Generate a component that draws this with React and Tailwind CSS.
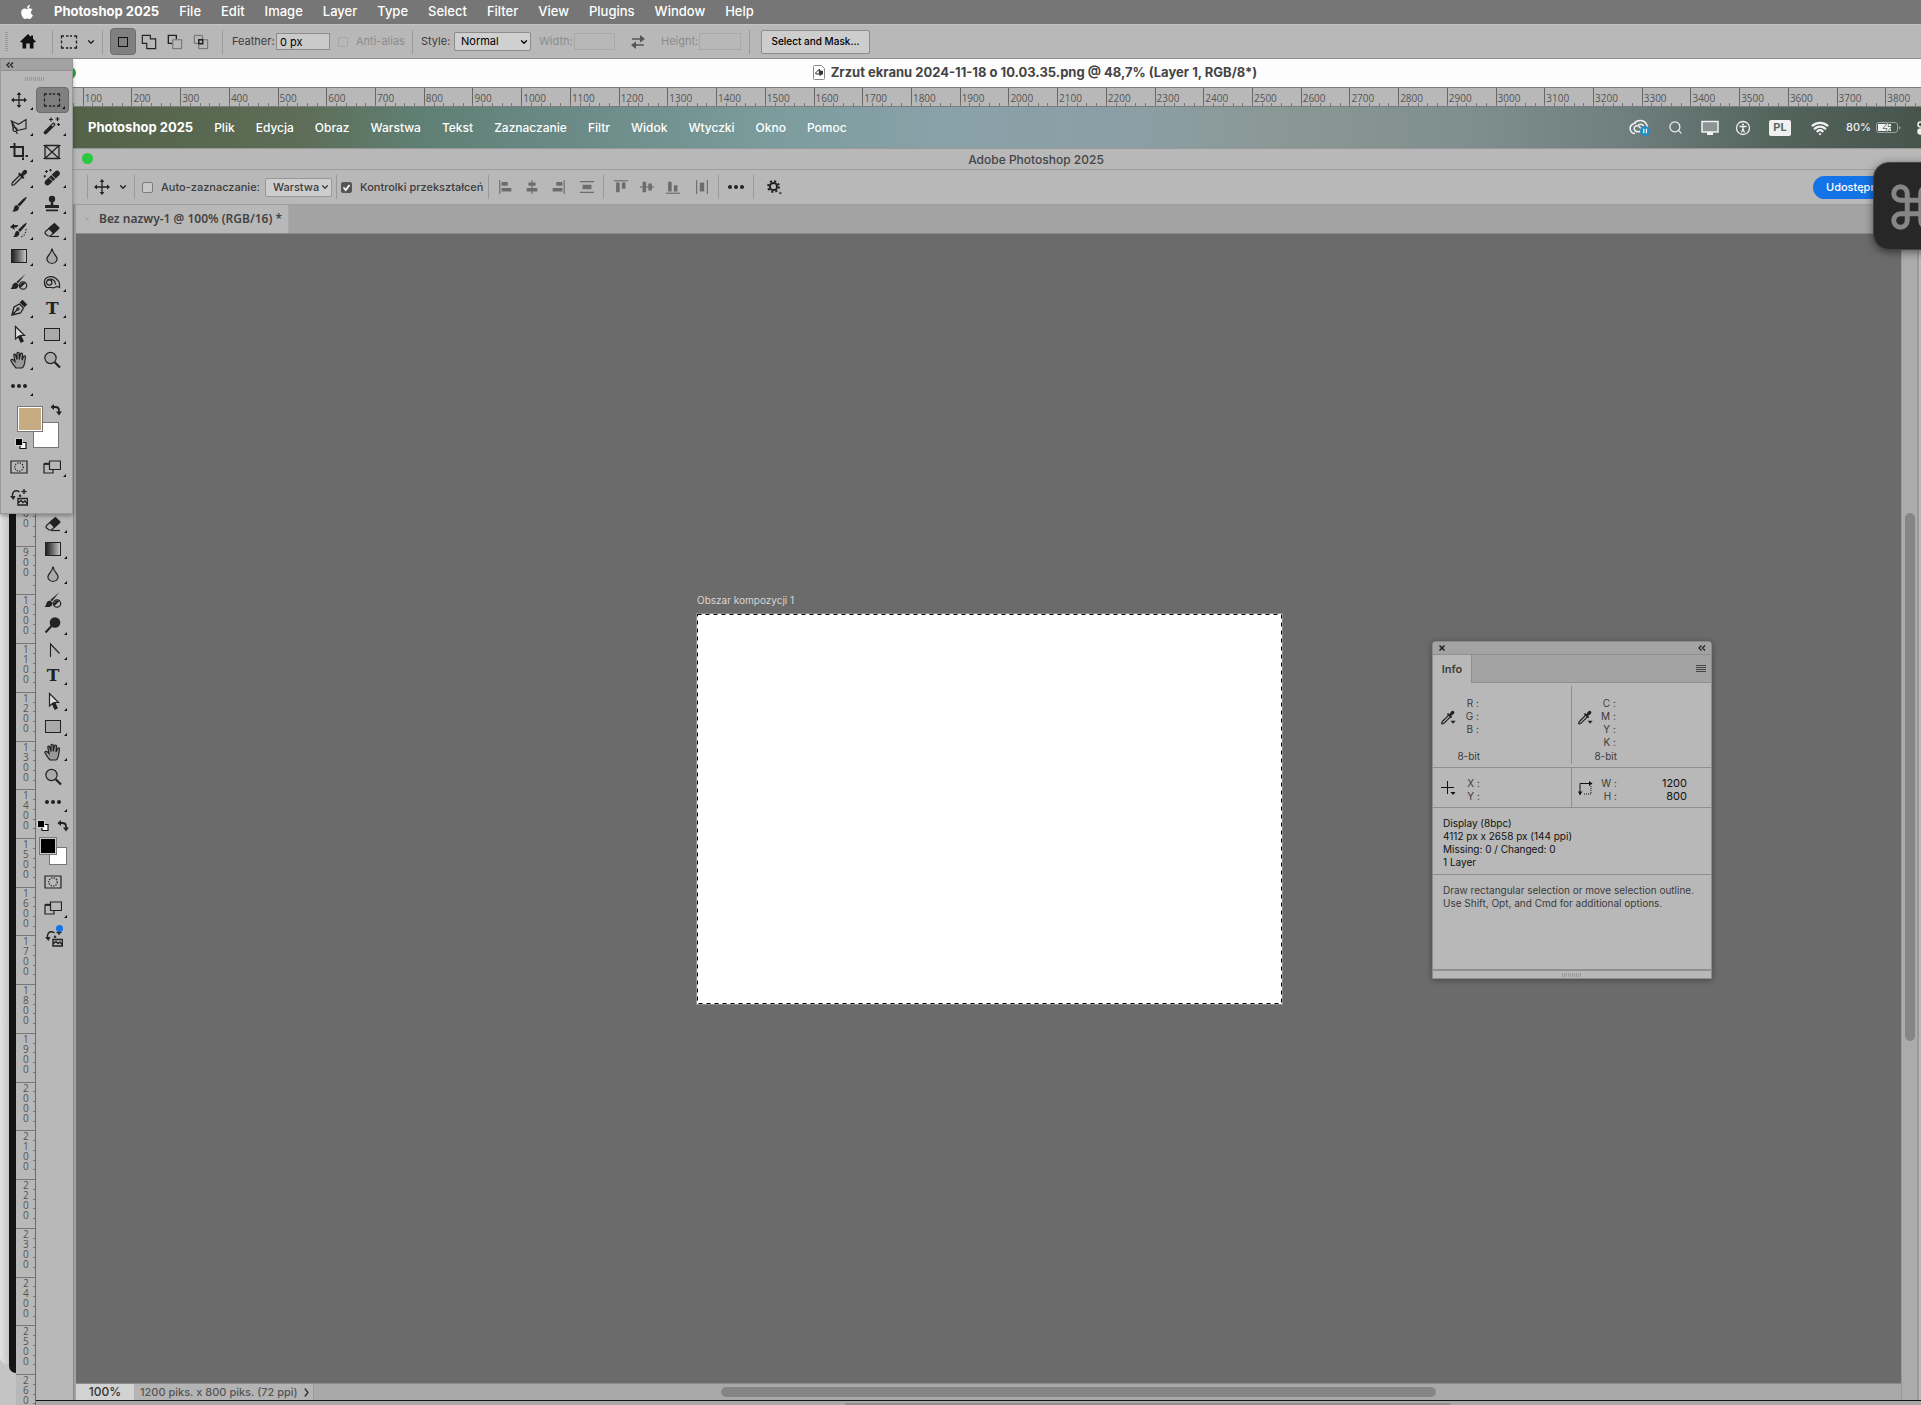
import React, { useState } from 'react';
import { FaApple } from 'react-icons/fa';
import { Command, ChevronDown, Search, Wifi, X } from 'lucide-react';

const OUTER_MENU = ['File', 'Edit', 'Image', 'Layer', 'Type', 'Select', 'Filter', 'View', 'Plugins', 'Window', 'Help'];
const INNER_MENU = ['Plik', 'Edycja', 'Obraz', 'Warstwa', 'Tekst', 'Zaznaczanie', 'Filtr', 'Widok', 'Wtyczki', 'Okno', 'Pomoc'];

// 18x18 stroke icon wrapper, shared by all the tools
const Icon = ({ children, size = 18, className = '' }) => (
  <svg width={size} height={size} viewBox="0 0 18 18" fill="none" stroke="currentColor" strokeWidth="1.2" className={`shrink-0 ${className}`}>
    {children}
  </svg>
);

const MoveIcon = () => (
  <Icon>
    <path d="M9 2v14M2 9h14" strokeWidth="1.3" />
    <path d="M9 1L6.600 4h4.800zM9 17l-2.400-3h4.800zM1 9l3-2.400v4.800zM17 9l-3-2.400v4.800z" fill="currentColor" stroke="none" />
  </Icon>
);

const MarqueeIcon = () => (
  <Icon>
    <path d="M1.500 5.500V3h2.500M6 3h2.500M10 3h2M14 3h2.500v2.500M16.500 7.500v3M16.500 12.500V15H14M12 15h-2M8.500 15H6M4 15H1.500v-2.500M1.500 10.500v-3" strokeWidth="1.300" />
  </Icon>
);

const LassoIcon = () => (
  <Icon>
    <path d="M6.500 13L1.500 4l7 3.200L16 2.500v9L7 13.500M1.500 4l2 8" />
    <circle cx="5" cy="12.500" r="2" />
    <path d="M6 14.500L7.500 17" />
  </Icon>
);

const WandIcon = () => (
  <Icon>
    <path d="M2.500 15.500L10.500 7.500" strokeWidth="3.600" strokeLinecap="round" />
    <path d="M9 9L10.700 7.300" stroke="#b8b8b8" strokeWidth="1.400" />
    <path d="M8 .5v4M6 2.500h4M14.500 0v4M12.500 2h4M15.500 6v3M14 7.500h3" strokeWidth="1.200" />
  </Icon>
);

const CropIcon = () => (
  <Icon>
    <path d="M4.500 0v13H14M0 4h13v9M13 14.500V17M15.500 13H18" strokeWidth="2" />
  </Icon>
);

const FrameIcon = () => (
  <Icon>
    <path d="M2 2.500h14v13H2zM2 2.500l14 13M16 2.500l-14 13" strokeWidth="1.300" />
    <path d="M.5 2.500h1.500M16 2.500h1.500M.5 15.500h1.500M16 15.500h1.500" />
  </Icon>
);

const EyedropperIcon = ({ size }) => (
  <Icon size={size}>
    <path d="M10 6L2.500 13.500Q1.500 15 2 16Q3 16.500 4.500 15.500L12 8" strokeWidth="1.300" />
    <path d="M8 5L9.500 3.500L11 5L13 2Q15 0 16.500 1.500Q18 3 16 5L13 7L14.500 8.500L13 10z" fill="currentColor" stroke="none" />
  </Icon>
);

// eyedropper with the small menu arrow used in the Info panel
const SamplerIcon = () => (
  <svg width="15" height="15" viewBox="0 0 18 18" fill="none" stroke="currentColor">
    <path d="M9 6.500L2 13.500Q.5 15 1 16.500Q2.500 17 4 15.500L11 8.500" strokeWidth="1.500" />
    <path d="M7 5L8.500 3.500L10 5L12 2Q14 0 15.500 1.500Q17 3 15 5L12 7L13.500 8.500L12 10z" fill="currentColor" stroke="none" />
    <path d="M11.500 13h6l-3 3.500z" fill="currentColor" stroke="none" />
  </svg>
);

const HealIcon = () => (
  <Icon>
    <path d="M4.500 13.500l9.500-9" strokeWidth="5.600" strokeLinecap="round" />
    <path d="M6 8.500l5 5M8.500 6l5 5" stroke="#b8b8b8" strokeWidth="1" />
    <path d="M3.500 1v3M2 2.500h3M7.500 0v2.500M6.200 1.200h2.600M1.800 6v2.500M.5 7.200h2.600" strokeWidth="1" />
  </Icon>
);

const BrushIcon = () => (
  <Icon>
    <path d="M16.500 2Q17 3 14 6.500L9.500 11.500L7.500 9.500L13 4Q16 1.500 16.500 2zM7 10l2 2Q9 16 5 16.500H2Q4 15 4 12.500Q4.500 10.300 7 10z" fill="currentColor" stroke="none" />
  </Icon>
);

const StampIcon = () => (
  <Icon>
    <circle cx="9" cy="4" r="3.200" fill="currentColor" stroke="none" />
    <path d="M8 6h2l.4 4H15q1 0 1 1.200V13H2v-1.800Q2 10 3 10h4.600zM3 14.500h12v1.800H3z" fill="currentColor" stroke="none" />
  </Icon>
);

const HistoryBrushIcon = () => (
  <Icon>
    <path d="M16.500 1.500Q17 3 14 6.500L10 11L8 9L13 4zM7.500 9.700l2 2Q9 15.500 6 16H3Q5 14.500 5 12.500Q5.500 10 7.500 9.700z" fill="currentColor" stroke="none" />
    <path d="M0 6l4-3.500V4h4.500l-2 2.500H4L5 9z" fill="currentColor" stroke="none" />
    <path d="M16 8Q16 14 11 16" strokeDasharray="1.200 1.600" />
  </Icon>
);

const EraserIcon = () => (
  <Icon>
    <path d="M2.500 10.500L10.500 3.500L15 8L7.500 15H5L2 12.500z" />
    <path d="M6 7.500L11.500 2.500L16 7L10.500 12.200z" fill="currentColor" />
    <path d="M7 15.500h9" />
  </Icon>
);

const GradientIcon = () => (
  <span className="block w-4 h-[14px] border border-current bg-linear-to-r from-[#222] to-[#c8c8c8]" />
);

const DropIcon = () => (
  <Icon>
    <path d="M9 1.500Q9.500 5 12.500 8.500Q15 11.500 13.500 14Q12 16.500 9 16.500Q6 16.500 4.500 14Q3 11.500 5.500 8.500Q8.500 5 9 1.500z" fill="#aaa" />
  </Icon>
);

const MixerIcon = () => (
  <Icon>
    <path d="M15.500 1L8 10.200L6.400 9zM6 9.500l2.500 2Q8.500 15.500 5 16H.5Q2.500 14.500 2.500 12Q3.500 9.500 6 9.500z" fill="currentColor" stroke="none" />
    <circle cx="13" cy="12.500" r="3.700" />
    <path d="M15.500 10A3.700 3.700 0 0 0 10.400 15z" fill="currentColor" stroke="none" />
  </Icon>
);

const SpongeIcon = () => (
  <Icon>
    <path d="M1.500 8Q2 5 6 3.800Q10 2.800 13 5.500Q16.500 8 16.500 11.500V14.500L13.500 13.500Q11 15.500 8.500 14.500L3.500 14.500Q1 12 1.500 8z" />
    <circle cx="6.200" cy="9.500" r="2.700" />
    <path d="M4 7.200Q8 5 11 7.500Q12.500 9 12.500 11.500" />
  </Icon>
);

const DodgeIcon = () => (
  <Icon>
    <circle cx="11" cy="6.500" r="5.300" fill="currentColor" stroke="none" />
    <path d="M7.500 10L1.500 16.500" strokeWidth="2" />
  </Icon>
);

const PenIcon = () => (
  <Icon>
    <path d="M2 16L4 8L9.500 5L13.500 9L10.500 14L2 16zM2 16l5.500-5.500" strokeWidth="1.300" />
    <circle cx="8" cy="10" r="1.100" />
    <path d="M10.500 3.500L12.500 1.500L16.500 5.500L14.500 7.500z" fill="currentColor" />
  </Icon>
);

const CornerIcon = () => (
  <Icon>
    <path d="M6.500 16V3l9 9.500" strokeWidth="1.100" />
  </Icon>
);

const TypeIcon = () => <span className="font-['DejaVu_Serif',serif] font-bold text-[17px] leading-none">T</span>;

const ArrowIcon = () => (
  <Icon>
    <path d="M5.500 1.500V14L8.500 11.500L11 17L13 16L10.500 10.500H14.500z" fill="#ddd" />
    <path d="M8.500 11.500L11 17L13 16L10.500 10.500z" fill="currentColor" />
  </Icon>
);

const RectIcon = () => <span className="block w-4 h-[13px] border border-current bg-[#aaa]" />;

const HandIcon = () => (
  <Icon>
    <path d="M6 17Q3.500 14.500 .8 9.500Q1.500 7.500 3.500 9L5 10.500L3.800 4Q4.200 2.500 5.500 3.500L7 8.500V2Q8 .5 9.200 2V8.500L10.500 2.500Q12 1.500 12.500 3L12 9L14 5Q15.500 4.500 15.500 6L14.500 12.500Q14 16 12 17z" fill="#999" />
  </Icon>
);

const ZoomIcon = () => (
  <Icon>
    <circle cx="7.500" cy="7" r="5.600" fill="#aaa" />
    <path d="M11.700 11.200L17 16.500" strokeWidth="2.200" />
  </Icon>
);

const DotsIcon = () => (
  <Icon>
    <g fill="currentColor" stroke="none">
      <circle cx="3" cy="9" r="2" />
      <circle cx="9" cy="9" r="2" />
      <circle cx="15" cy="9" r="2" />
    </g>
  </Icon>
);

const SwapColorsIcon = () => (
  <svg width="12" height="12" viewBox="0 0 12 12" className="text-[#222]">
    <path d="M3 3h2.500Q9 3 9 6.500V8" fill="none" stroke="currentColor" strokeWidth="1.800" />
    <path d="M4 0v6L.5 3zM6 7.500h6L9 11.500z" fill="currentColor" />
  </svg>
);

const DefaultColorsIcon = () => (
  <svg width="12" height="12" viewBox="0 0 12 12">
    <path d="M5 4.500h6v6H5z" fill="#fff" stroke="#111" strokeWidth="1.200" />
    <path d="M.5 .5h7v7h-7z" fill="#000" stroke="#eee" strokeWidth=".8" />
  </svg>
);

const MaskIcon = () => (
  <Icon>
    <path d="M1 3h16v12H1z" />
    <circle cx="9" cy="9" r="4.200" strokeDasharray="1.300 1.200" />
  </Icon>
);

const ScreenModeIcon = () => (
  <Icon>
    <path d="M1 6h9v9H1z" />
    <path d="M1 5.800h5" strokeWidth="2" />
    <path d="M6.500 3h11v8.500h-11z" fill="#b8b8b8" />
  </Icon>
);

const GenerateIcon = () => (
  <Icon>
    <path d="M9.500 4Q6 1.500 3.500 4Q2 6 2.500 9" strokeWidth="1.400" />
    <path d="M0 8h5.500L3.500 12z" fill="currentColor" stroke="none" />
    <path d="M8 10.500h9.500v6.500H8zM8 15l3-2.500 2 2 2-1.500 2.500 3" strokeWidth="1.400" />
    <path d="M14 1v5M11.500 3.500h5M10 6.500v2.500M8.800 7.800h2.500" strokeWidth="1.300" />
  </Icon>
);

const HomeIcon = () => (
  <svg width="16" height="15" viewBox="0 0 16 15" className="text-[#111]" fill="currentColor">
    <path d="M8 0L0 7.800L1.500 8.500H2.500V14Q2.500 14.500 3 14.500H6.200V9.500H9.800V14.500H13Q13.500 14.500 13.500 14V8.500H14.500L16 7.800L13 4.800V1.500H11V3z" />
  </svg>
);

const GearIcon = () => (
  <svg width="15" height="15" viewBox="0 0 15 15" fill="none" stroke="currentColor" className="text-[#222]">
    <circle cx="6.500" cy="6.500" r="3.600" strokeWidth="2" />
    <circle cx="6.500" cy="6.500" r="5.400" strokeWidth="2" strokeDasharray="2.120 2.120" />
    <path d="M11.500 12.500h3.500l-1.700 2z" fill="currentColor" stroke="none" />
  </svg>
);

const CollapseIcon = () => (
  <svg width="8" height="6" viewBox="0 0 8 6" fill="none" stroke="#222" strokeWidth="1.300">
    <path d="M3.500 .5L1 3l2.500 2.500M7 .5L4.500 3L7 5.500" />
  </svg>
);

const TOOLS = [
  { name: 'Move', icon: MoveIcon, more: true },
  { name: 'Rectangular Marquee', icon: MarqueeIcon, more: true },
  { name: 'Polygonal Lasso', icon: LassoIcon, more: true },
  { name: 'Magic Wand', icon: WandIcon, more: true },
  { name: 'Crop', icon: CropIcon, more: true },
  { name: 'Frame', icon: FrameIcon },
  { name: 'Eyedropper', icon: EyedropperIcon, more: true },
  { name: 'Healing Brush', icon: HealIcon, more: true },
  { name: 'Brush', icon: BrushIcon, more: true },
  { name: 'Clone Stamp', icon: StampIcon, more: true },
  { name: 'History Brush', icon: HistoryBrushIcon, more: true },
  { name: 'Eraser', icon: EraserIcon, more: true },
  { name: 'Gradient', icon: GradientIcon, more: true },
  { name: 'Blur', icon: DropIcon, more: true },
  { name: 'Adjustment Brush', icon: MixerIcon },
  { name: 'Sponge', icon: SpongeIcon, more: true },
  { name: 'Pen', icon: PenIcon, more: true },
  { name: 'Type', icon: TypeIcon, more: true },
  { name: 'Path Selection', icon: ArrowIcon, more: true },
  { name: 'Rectangle', icon: RectIcon, more: true },
  { name: 'Hand', icon: HandIcon, more: true },
  { name: 'Zoom', icon: ZoomIcon },
  { name: 'Edit Toolbar', icon: DotsIcon, more: true },
];

const INNER_TOOLS = [
  { name: 'Gumka', icon: EraserIcon, more: true },
  { name: 'Gradient', icon: GradientIcon, more: true },
  { name: 'Rozmywanie', icon: DropIcon, more: true },
  { name: 'Pędzel dopasowania', icon: MixerIcon },
  { name: 'Rozjaśnianie', icon: DodgeIcon, more: true },
  { name: 'Konwertowanie', icon: CornerIcon, more: true },
  { name: 'Tekst', icon: TypeIcon, more: true },
  { name: 'Zaznaczanie ścieżek', icon: ArrowIcon, more: true },
  { name: 'Prostokąt', icon: RectIcon, more: true },
  { name: 'Rączka', icon: HandIcon, more: true },
  { name: 'Lupka', icon: ZoomIcon },
  { name: 'Edytuj pasek', icon: DotsIcon, more: true },
];

const MoreMark = () => (
  <svg width="3" height="3" viewBox="0 0 3 3" className="absolute right-[3px] bottom-[3px]">
    <path d="M3 0v3H0z" fill="#111" />
  </svg>
);

const ToolButton = ({ tool, selected, onClick, className = '' }) => {
  const ToolIcon = tool.icon;
  return (
    <button
      aria-label={tool.name}
      onClick={onClick}
      className={`relative flex items-center justify-center text-[#222] ${selected ? 'bg-[#808080] rounded-sm border border-[#6c6c6c]' : ''} ${className}`}
    >
      <ToolIcon />
      {tool.more && <MoreMark />}
    </button>
  );
};

const Separator = ({ className = '' }) => <span className={`w-px h-6 bg-[#9a9a9a] shrink-0 ${className}`} />;

const MenuBar = () => (
  <nav className="h-6 shrink-0 bg-[#767676] flex items-center pl-5 pb-px text-white text-[13px] font-medium text-shadow-xs">
    <FaApple className="w-[14px] h-4 mr-5" />
    <div className="flex items-center gap-5">
      <button className="font-bold">Photoshop 2025</button>
      {OUTER_MENU.map(item => <button key={item}>{item}</button>)}
    </div>
  </nav>
);

const OptionsBar = () => (
  <div className="h-[35px] shrink-0 bg-[#b8b8b8] border-t border-t-[#c2c2c2] border-b border-b-[#8e8e8e] flex items-center text-[11px] text-[#3c3c3c] whitespace-nowrap">
    <span className="ml-[5px] w-[3px] h-5 bg-[repeating-linear-gradient(to_bottom,#999_0_1px,transparent_1px_2px)]" />
    <button aria-label="Home" className="ml-3"><HomeIcon /></button>
    <Separator className="ml-4" />
    <button aria-label="Tool preset" className="ml-[7px] flex items-center gap-2 text-[#222]"><MarqueeIcon /><ChevronDown className="w-[10px] h-[10px]" strokeWidth={3} /></button>
    <Separator className="ml-[6px]" />
    <div className="ml-[7px] flex">
      <button aria-label="New selection" className="w-[26px] h-[27px] flex items-center justify-center bg-[#808080] border border-[#6c6c6c] rounded-sm">
        <span className="w-[10px] h-[10px] border border-[#111]" />
      </button>
      <button aria-label="Add to selection" className="w-[26px] flex items-center justify-center text-[#222]">
        <Icon size={16}><path d="M1.500 1.500h9v4h6v11h-10v-6h-5z" strokeWidth="1.300" /></Icon>
      </button>
      <button aria-label="Subtract from selection" className="w-[26px] flex items-center justify-center text-[#222]">
        <Icon size={16}><path d="M6 10.500H1.500v-9h9V6" strokeWidth="1.500" /><path d="M6.500 6.500h10v10h-10z" stroke="#666" strokeWidth="1" /></Icon>
      </button>
      <button aria-label="Intersect with selection" className="w-[26px] flex items-center justify-center text-[#222]">
        <Icon size={16}><path d="M1.500 1.500h9v9h-9zM6.500 6.500h10v10h-10z" stroke="#666" strokeWidth="1" /><path d="M6.500 6.500h4.500V11H6.500z" strokeWidth="1.500" /></Icon>
      </button>
    </div>
    <Separator className="ml-2" />
    <label htmlFor="feather" className="ml-[9px] w-11">Feather:</label>
    <input id="feather" defaultValue="0 px" className="w-[54px] h-[17px] pl-[3px] bg-[#cacaca] border border-[#8c8c8c] text-black" />
    <input id="antialias" type="checkbox" disabled className="ml-2 w-[10px] h-[10px] appearance-none border border-[#a6a6a6] rounded-xs" />
    <label htmlFor="antialias" className="ml-2 w-14 text-[#8c8c8c]">Anti-alias</label>
    <Separator />
    <label htmlFor="style" className="ml-2 w-[33px]">Style:</label>
    <span className="relative flex items-center">
      <select id="style" className="appearance-none w-[77px] h-[19px] pl-[6px] bg-[#d0d0d0] border border-[#8c8c8c] rounded-xs text-black">
        <option>Normal</option>
      </select>
      <ChevronDown className="absolute right-[2px] w-[10px] h-[10px] text-black pointer-events-none" strokeWidth={3} />
    </span>
    <label htmlFor="width" className="ml-2 w-[35px] text-[#8c8c8c]">Width:</label>
    <input id="width" disabled className="w-[41px] h-[17px] border border-[#a9a9a9]" />
    <button aria-label="Swap width and height" className="ml-4 text-[#555]">
      <svg width="14" height="14" viewBox="0 0 14 14" fill="none" stroke="currentColor" strokeWidth="1.500">
        <path d="M1 4h9M13 10H4" />
        <path d="M9 0l5 4-5 3.500zM5 6.500L0 10l5 4z" fill="currentColor" stroke="none" />
      </svg>
    </button>
    <label htmlFor="height" className="ml-4 w-[38px] text-[#8c8c8c]">Height:</label>
    <input id="height" disabled className="w-[42px] h-[17px] border border-[#a9a9a9]" />
    <Separator className="ml-2" />
    <button className="ml-[11px] h-6 w-[109px] bg-[#cdcdcd] border border-[#8c8c8c] rounded-xs text-[10px] font-medium text-black">Select and Mask...</button>
  </div>
);

const DocumentTitle = () => (
  <header className="relative h-7 shrink-0 bg-[#fdfdfd] flex items-center justify-center gap-[6px] pl-[149px] pb-px text-[13px] font-bold text-[#444]">
    <span className="absolute left-[64px] w-3 h-3 rounded-full bg-[#28a53a]" />
    <svg width="12" height="15" viewBox="0 0 12 15" fill="none" stroke="#888" strokeWidth="1">
      <path d="M.5 1.500q0-1 1-1H8.500L11.500 3.500V13.500q0 1-1 1H1.500q-1 0-1-1z" fill="#fff" />
      <path d="M2.500 8L6.500 4v5H3z" stroke="#333" />
      <path d="M5.500 5L10 6v3L6.500 11z" fill="#333" stroke="none" />
    </svg>
    <h1>Zrzut ekranu 2024-11-18 o 10.03.35.png @ 48,7% (Layer 1, RGB/8*)</h1>
  </header>
);

const HorizontalRuler = () => (
  <div className="h-5 shrink-0 bg-[#b8b8b8] border-y border-[#7c7c7c] pl-[34px] overflow-hidden">
    <div className="w-[1900px] h-full flex">
      {Array.from({ length: 39 }, (_, i) => (
        <div key={i} className="flex-1 min-w-0 flex flex-col justify-between border-l border-[#666]">
          <span className="h-[15px] pl-px font-['Open_Sans',sans-serif] text-[10px] leading-[20px] text-[#555]">{i * 100}</span>
          <span className="h-[3px] -ml-px flex">
            {[0, 1, 2, 3, 4].map(t => <span key={t} className="flex-1 border-l border-[#777]" />)}
          </span>
        </div>
      ))}
    </div>
  </div>
);

const VerticalRuler = () => (
  <div className="w-5 shrink-0 bg-[#b8b8b8] border-r border-[#6a6a6a] overflow-hidden">
    <div className="h-[1316px] flex flex-col">
      {Array.from({ length: 27 }, (_, i) => (
        <div key={i} className="flex-1 min-h-0 flex justify-between border-t border-[#777]">
          <span className="w-[7px] ml-[7px] break-all font-['Open_Sans',sans-serif] text-[10px] leading-[10px] text-[#555]">{i * 100}</span>
          <span className="w-[2px] shrink-0 -mt-px flex flex-col">
            {[0, 1, 2, 3, 4].map(t => <span key={t} className="flex-1 border-t border-[#777]" />)}
          </span>
        </div>
      ))}
    </div>
  </div>
);

const StatusIcons = () => (
  <div className="flex items-center text-[#f0f0f0] text-[11px] font-medium">
    <svg width="22" height="18" viewBox="0 0 22 18" fill="none" stroke="currentColor" strokeWidth="1.500">
      <path d="M6 14.500A5 5 0 0 1 4 5Q5 4 7 4M5 4.500Q8 1 12 1.500Q17.500 2.500 18.500 8" />
      <path d="M12 12Q9 13.500 6.500 12A3 3 0 0 1 6.500 7Q9 6 11 8.500L14 11M9 6Q12 4 15 7" />
      <circle cx="16" cy="12" r="5" fill="#1c8fc4" stroke="none" />
      <path d="M14.700 9.800v4.400M17.400 9.800v4.400" strokeWidth="1.300" />
    </svg>
    <Search className="ml-[17px] w-[15px] h-[15px]" />
    <svg width="18" height="16" viewBox="0 0 18 16" className="ml-[18px]">
      <path d="M1 1.500h16v10.500H1z" fill="#8b9694" stroke="currentColor" strokeWidth="1.500" />
      <path d="M6 12h6v3H6z" fill="currentColor" />
    </svg>
    <svg width="16" height="16" viewBox="0 0 16 16" fill="none" stroke="currentColor" strokeWidth="1.300" className="ml-4">
      <circle cx="8" cy="8" r="6.500" />
      <circle cx="8" cy="4.500" r="1" fill="currentColor" stroke="none" />
      <path d="M4.500 6.500h7M8 6.500V9l-1.500 3.500M8 9l1.500 3.500" />
    </svg>
    <span className="ml-[18px] w-[22px] h-4 flex items-center justify-center bg-[#f0f0f0] rounded-xs text-[11px] font-bold text-[#5a6662]">PL</span>
    <Wifi className="ml-5 w-[18px] h-[18px]" strokeWidth={3} />
    <span className="ml-[17px]">80%</span>
    <svg width="25" height="13" viewBox="0 0 25 13" className="ml-[5px] mr-4">
      <rect x=".5" y="1.500" width="21" height="10" rx="2.500" fill="none" stroke="#9aa5a1" />
      <path d="M2 3h13v7H2z" fill="currentColor" />
      <path d="M23 5v3.500q1.500-.5 1.500-1.700T23 5z" fill="#9aa5a1" />
      <path d="M13 0L7 7.500h4L9.500 13L16 5.500h-4z" fill="currentColor" stroke="#53625d" strokeWidth=".8" />
    </svg>
    <svg width="4" height="14" viewBox="0 0 4 14" fill="none" stroke="currentColor" strokeWidth="1.500">
      <rect x="1" y="1" width="13" height="5" rx="2.500" />
      <rect x="1" y="8" width="13" height="5" rx="2.500" fill="currentColor" />
    </svg>
  </div>
);

const InnerMenuBar = () => (
  <nav className="h-[41px] shrink-0 flex items-center justify-between pl-[52px] overflow-hidden bg-[linear-gradient(to_right,#526045_0%,#5d6d57_14%,#5f7f73_20%,#6c8b88_29%,#7b9c9c_39%,#89a1a9_48%,#8b9fa5_58%,#8a9895_66%,#7f8f8d_76%,#70807f_84%,#54655e_92%,#46544c_100%)]">
    <div className="flex items-center gap-[21px] text-[12px] font-medium text-white text-shadow-xs whitespace-nowrap">
      <button className="text-[13px] font-bold">Photoshop 2025</button>
      {INNER_MENU.map(item => <button key={item}>{item}</button>)}
    </div>
    <StatusIcons />
  </nav>
);

// Align icons: bars against a guide line
const AlignIcon = ({ line, bars }) => (
  <Icon size={16}>
    <path d={line} strokeWidth="1.300" />
    <path d={bars} fill="currentColor" stroke="none" />
  </Icon>
);

const H_ALIGN = [
  { name: 'Do lewej', line: 'M2 1v16', bars: 'M4 3.500h7v4H4zM4 10h11v4H4z' },
  { name: 'Do środka w poziomie', line: 'M9 1v16', bars: 'M5 4h8v3.500H5zM3 10h12v4H3z' },
  { name: 'Do prawej', line: 'M16 1v16', bars: 'M7 3.500h7v4H7zM3 10h11v4H3z' },
  { name: 'Rozłóż w pionie', line: 'M1 3h16M1 15h16', bars: 'M4 6.500h10v5H4z' },
];

const V_ALIGN = [
  { name: 'Do góry', line: 'M1 2h16', bars: 'M3.500 4h4v11h-4zM10 4h4v7h-4z' },
  { name: 'Do środka w pionie', line: 'M1 9h16', bars: 'M4 3h4v12H4zM10.500 5h4v8h-4z' },
  { name: 'Do dołu', line: 'M1 16h16', bars: 'M3.500 3h4v11h-4zM10 7h4v7h-4z' },
  { name: 'Rozłóż w poziomie', line: 'M3 1v16M15 1v16', bars: 'M6.500 4h5v10h-5z' },
];

const AlignGroup = ({ items }) => (
  <div className="ml-[9px] mr-2 flex gap-[10px] text-[#6c6c6c]">
    {items.map(a => (
      <button key={a.name} aria-label={a.name} className="last:ml-[3px]"><AlignIcon line={a.line} bars={a.bars} /></button>
    ))}
  </div>
);

const InnerOptionsBar = () => {
  const [autoSelect, setAutoSelect] = useState(false);
  const [transform, setTransform] = useState(true);

  return (
    <div className="h-9 shrink-0 border-y border-[#9d9d9d] flex items-center text-[11px] font-medium text-[#3c3c3c] whitespace-nowrap overflow-hidden">
      <Separator className="ml-[51px]" />
      <button aria-label="Przesuwanie" className="ml-[5px] flex items-center gap-[7px] text-[#222]">
        <MoveIcon />
        <ChevronDown className="w-[10px] h-[10px]" strokeWidth={3} />
      </button>
      <Separator className="ml-[6px]" />
      <input id="auto" type="checkbox" checked={autoSelect} onChange={() => setAutoSelect(!autoSelect)} className="ml-[7px] w-[11px] h-[11px] appearance-none border border-[#7c7c7c] bg-[#c8c8c8] rounded-xs" />
      <label htmlFor="auto" className="ml-2 w-[104px]">Auto-zaznaczanie:</label>
      <span className="relative flex items-center">
        <select aria-label="Auto-zaznaczanie" className="appearance-none w-[67px] h-[19px] pl-[7px] bg-[#cdcdcd] border border-[#999] rounded-xs">
          <option>Warstwa</option>
        </select>
        <ChevronDown className="absolute right-[2px] w-[10px] h-[10px] pointer-events-none" strokeWidth={3} />
      </span>
      <Separator className="ml-1" />
      <span className="relative ml-1 flex">
        <input id="controls" type="checkbox" checked={transform} onChange={() => setTransform(!transform)} className="w-[11px] h-[11px] appearance-none bg-[#c8c8c8] border border-[#555] checked:bg-[#555] rounded-xs" />
        {transform && (
          <svg viewBox="0 0 11 11" className="absolute inset-0 w-[11px] h-[11px] pointer-events-none" fill="none" stroke="#fff" strokeWidth="1.800">
            <path d="M2.500 5.500l2.200 2.500L8.500 3" />
          </svg>
        )}
      </span>
      <label htmlFor="controls" className="ml-2 w-[128px]">Kontrolki przekształceń</label>
      <Separator />
      <AlignGroup items={H_ALIGN} />
      <Separator />
      <AlignGroup items={V_ALIGN} />
      <Separator />
      <button aria-label="Więcej" className="mx-2 text-[#222]"><DotsIcon /></button>
      <Separator />
      <button aria-label="Ustawienia" className="ml-[13px]"><GearIcon /></button>
      <button className="ml-auto shrink-0 w-[108px] h-[23px] pl-[13px] text-left bg-[#1473e6] rounded-l-full text-white">Udostępnij</button>
    </div>
  );
};

const Swatches = ({ front, small }) => (
  <div className={small ? 'relative w-7 h-7 ml-[3px]' : 'relative w-[42px] h-[42px]'}>
    <button aria-label="Background color" className={`absolute right-0 bottom-0 bg-white border border-[#777] ${small ? 'w-[18px] h-[18px]' : 'w-[26px] h-[26px]'}`} />
    <button aria-label="Foreground color" className={`absolute left-0 top-0 border border-[#777] ring-1 ring-inset ${front} ${small ? 'w-[18px] h-[18px] ring-[#ccc]' : 'w-[26px] h-[26px] ring-white'}`} />
  </div>
);

const InnerToolbar = () => (
  <aside className="w-[37px] shrink-0 flex flex-col pt-[306px]">
    <div className="h-[304px] flex flex-col">
      {INNER_TOOLS.map(tool => <ToolButton key={tool.name} tool={tool} className="flex-1 w-[34px]" />)}
    </div>
    <div className="mt-[3px] pl-px pr-1 h-4 flex items-center justify-between">
      <button aria-label="Domyślne kolory"><DefaultColorsIcon /></button>
      <button aria-label="Zamień kolory"><SwapColorsIcon /></button>
    </div>
    <div className="mt-[3px]"><Swatches small front="bg-black" /></div>
    <ToolButton tool={{ name: 'Szybka maska', icon: MaskIcon }} className="mt-1 h-[26px] w-[34px]" />
    <ToolButton tool={{ name: 'Tryb ekranu', icon: ScreenModeIcon, more: true }} className="h-[26px] w-[34px]" />
    <div className="relative mt-1">
      <ToolButton tool={{ name: 'Generuj', icon: GenerateIcon }} className="h-[26px] w-[35px]" />
      <span className="absolute right-[10px] top-0 w-[7px] h-[7px] rounded-full bg-[#1473e6]" />
    </div>
  </aside>
);

const Artboard = () => (
  <div className="absolute left-[620px] top-[359px]">
    <p className="h-[21px] text-[10px] leading-[14px] text-[#d6d6d6]">Obszar kompozycji 1</p>
    <div className="relative w-[585px] h-[390px] bg-white outline outline-[#8e8e8e]">
      <svg className="absolute inset-0 w-full h-full">
        <rect x=".5" y=".5" width="584" height="389" fill="none" stroke="#000" strokeWidth="1" strokeDasharray="4 4" />
      </svg>
    </div>
  </div>
);

const InfoRows = ({ rows, className = '' }) => (
  <dl className={className}>
    {rows.map(([label, value]) => (
      <div key={label} className="flex h-[13px] leading-[13px]">
        <dt className="w-6 flex justify-end gap-[3px]"><span>{label}</span><span>:</span></dt>
        <dd className="flex-1 text-right text-[11px] text-[#111]">{value}</dd>
      </div>
    ))}
  </dl>
);

const InfoPanel = () => (
  <section className="absolute right-[190px] top-[407px] w-[280px] bg-[#b8b8b8] border border-[#8c8c8c] rounded-t-sm shadow-[0_1px_6px_rgba(0,0,0,0.35)] text-[10px] text-[#3c3c3c]">
    <div className="h-[13px] px-[5px] flex items-center justify-between bg-[#a3a3a3] border-b border-[#8f8f8f] text-[#222]">
      <button aria-label="Close"><X className="w-2 h-2" strokeWidth={5} /></button>
      <CollapseIcon />
    </div>
    <div className="h-7 flex bg-[#a3a3a3]">
      <h2 className="w-[39px] flex items-center justify-center bg-[#b8b8b8] border-r border-[#8f8f8f] text-[11px] font-semibold">Info</h2>
      <div className="flex-1 flex items-center justify-end pr-[5px] border-b border-[#8f8f8f]">
        <button aria-label="Panel menu" className="w-[10px] h-[7px] bg-[repeating-linear-gradient(to_bottom,#444_0_1px,transparent_1px_2px)]" />
      </div>
    </div>
    <div className="grid grid-cols-2 border-b border-[#8f8f8f]">
      <div className="flex my-[3px] h-[78px] pt-[11px] pl-2 border-r border-[#8f8f8f]">
        <span className="pt-[13px] text-[#222]"><SamplerIcon /></span>
        <div className="w-[23px] shrink-0">
          <InfoRows rows={[['R'], ['G'], ['B']]} />
          <p className="mt-[14px] w-6 leading-[13px] whitespace-nowrap flex justify-end">8-bit</p>
        </div>
      </div>
      <div className="flex my-[3px] h-[78px] pt-[11px] pl-[6px]">
        <span className="pt-[13px] text-[#222]"><SamplerIcon /></span>
        <div className="w-[23px] shrink-0">
          <InfoRows rows={[['C'], ['M'], ['Y'], ['K']]} />
          <p className="mt-px w-6 leading-[13px] whitespace-nowrap flex justify-end">8-bit</p>
        </div>
      </div>
    </div>
    <div className="grid grid-cols-2 h-10 border-b border-[#8f8f8f]">
      <div className="flex pt-[9px] pl-2 border-r border-[#8f8f8f]">
        <svg width="15" height="15" viewBox="0 0 15 15" className="mt-1" fill="none" stroke="#111"><path d="M6.500 0v13M0 6.500h13" /><path d="M9.500 11h5l-2.500 3z" fill="#111" stroke="none" /></svg>
        <InfoRows rows={[['X'], ['Y']]} />
      </div>
      <div className="flex pt-[9px] pl-[6px]">
        <svg width="15" height="15" viewBox="0 0 15 15" className="mt-1" fill="none" stroke="#111"><path d="M2 14V2.500h11" /><path d="M0 10.500h4.500L2 14zM11 0v5l3.500-2.500z" fill="#111" stroke="none" /><path d="M13 5v8H5" strokeDasharray="1 1" /></svg>
        <InfoRows className="flex-1 pr-6" rows={[['W', '1200'], ['H', '800']]} />
      </div>
    </div>
    <p className="h-[67px] pt-[9px] pl-[10px] leading-[13px] text-[#111] border-b border-[#8f8f8f]">
      Display (8bpc)<br />4112 px x 2658 px (144 ppi)<br />Missing: 0 / Changed: 0<br />1 Layer
    </p>
    <p className="h-24 pt-[9px] pl-[10px] leading-[13px] whitespace-nowrap border-b-2 border-[#8f8f8f]">
      Draw rectangular selection or move selection outline.<br />Use Shift, Opt, and Cmd for additional options.
    </p>
    <div className="h-[7px] flex items-center justify-center">
      <span className="w-5 h-1 bg-[repeating-linear-gradient(to_right,#999_0_1px,transparent_1px_2px)]" />
    </div>
  </section>
);

const InnerWindow = () => (
  <main className="flex-1 min-w-0 flex flex-col bg-[#b8b8b8]">
    <InnerMenuBar />
    <div className="relative h-[21px] shrink-0 flex items-center justify-center pl-[115px] pt-px border-t border-[#999] text-[12px] font-medium text-[#444]">
      <span className="absolute left-[46px] top-1 w-[11px] h-[11px] rounded-full bg-[#28c840]" />
      Adobe Photoshop 2025
    </div>
    <InnerOptionsBar />
    <div className="flex-1 min-h-0 flex">
      <InnerToolbar />
      <div className="w-[3px] shrink-0 bg-[#a3a3a3] border-l border-[#888]" />
      <div className="flex-1 min-w-0 flex flex-col">
        <div className="h-[29px] shrink-0 bg-[#a3a3a3] border-b border-[#8c8c8c] flex">
          <div className="w-[213px] h-7 pl-[7px] flex items-center gap-2 bg-[#b8b8b8] border-r border-[#a8a8a8] font-['Noto_Sans',sans-serif] text-[12px] font-semibold text-[#444] whitespace-nowrap">
            <button aria-label="Zamknij"><X className="w-2 h-2 text-[#999]" /></button>
            Bez nazwy-1 @ 100% (RGB/16) *
          </div>
        </div>
        <div className="flex-1 min-h-0 flex">
          <div className="flex-1 min-w-0 flex flex-col">
            <div className="flex-1 bg-[#6b6b6b]" />
            <div className="h-[17px] shrink-0 flex items-center bg-[#a9a9a9] border-t border-[#8c8c8c] text-[11px] font-medium text-[#333]">
              <input aria-label="Powiększenie" defaultValue="100%" className="w-[58px] h-4 text-center text-[12px] bg-[#d2d2d2]" />
              <div className="w-[180px] h-4 pl-[6px] pr-1 flex items-center justify-between bg-[#b4b4b4] border-r border-[#999] text-[#555] whitespace-nowrap">
                1200 piks. x 800 piks. (72 ppi)
                <button aria-label="Informacje o dokumencie">
                  <svg width="5" height="9" viewBox="0 0 5 9" fill="none" stroke="#333" strokeWidth="1.400"><path d="M.8 .5L4 4.500L.8 8.500" /></svg>
                </button>
              </div>
              <div className="ml-[407px] w-[715px] h-[10px] rounded-full bg-[#858585]" />
            </div>
          </div>
          <div className="w-4 shrink-0 flex justify-center bg-[#ababab] border-l border-[#999]">
            <div className="mt-[279px] w-[10px] h-[528px] rounded-full bg-[#858585]" />
          </div>
          <div className="w-[2px] shrink-0 bg-[#999]" />
          <div className="w-[2px] shrink-0 bg-[#b8b8b8]" />
        </div>
      </div>
    </div>
  </main>
);

const ToolPanel = () => {
  const [active, setActive] = useState('Rectangular Marquee');

  return (
    <aside className="absolute left-0 top-[59px] w-[73px] h-[455px] bg-[#b8b8b8] border-x border-b border-[#999] shadow-[0_2px_4px_rgba(0,0,0,0.3)]">
      <div className="h-3 pl-[5px] flex items-center bg-[#a3a3a3] border-b border-[#909090]"><CollapseIcon /></div>
      <div className="h-4 pr-[3px] pb-[6px] flex items-end justify-center">
        <span className="w-5 h-1 bg-[repeating-linear-gradient(to_right,#999_0_1px,transparent_1px_2px)]" />
      </div>
      <div className="grid grid-cols-2 auto-rows-[26px] pl-px pr-[3px]">
        {TOOLS.map(tool => (
          <ToolButton key={tool.name} tool={tool} selected={tool.name === active} onClick={() => setActive(tool.name)} />
        ))}
      </div>
      <div className="relative mt-[7px] ml-4 w-[42px] h-[44px]">
        <Swatches front="bg-[#c8ab82]" />
        <button aria-label="Swap colors" className="absolute -right-[3px] -top-[2px]"><SwapColorsIcon /></button>
        <button aria-label="Default colors" className="absolute -left-[2px] bottom-0"><DefaultColorsIcon /></button>
      </div>
      <div className="grid grid-cols-2 pl-px pr-[3px] mt-1">
        <ToolButton tool={{ name: 'Quick Mask', icon: MaskIcon }} className="h-[26px]" />
        <ToolButton tool={{ name: 'Screen Mode', icon: ScreenModeIcon, more: true }} className="h-[26px]" />
        <ToolButton tool={{ name: 'Generate', icon: GenerateIcon }} className="h-[34px]" />
      </div>
    </aside>
  );
};

export default function App() {
  return (
    <div className="relative h-screen overflow-hidden flex flex-col bg-[#b8b8b8] font-[Inter,sans-serif]">
      <MenuBar />
      <OptionsBar />
      <DocumentTitle />
      <HorizontalRuler />
      <div className="flex-1 min-h-0 flex">
        <div className="w-4 shrink-0 flex flex-col bg-[#c4c4c4]">
          <div className="flex-1 flex mb-[32px]">
            <div className="w-[9px] mb-2 bg-linear-to-r from-[#e2e2e2] to-[#c6c6c6] rounded-bl-lg" />
            <div className="flex-1 bg-[#141414] rounded-bl-lg" />
          </div>
        </div>
        <VerticalRuler />
        <div className="relative flex-1 min-w-0 flex flex-col">
          <InnerWindow />
          <div className="h-[5px] shrink-0 flex bg-[#a9a9a9] border-t border-[#111] pl-[809px]">
            <div className="mt-[2px] w-[605px] h-[2px] bg-[#909090]" />
          </div>
        </div>
      </div>
      {/* floating windows over the canvas */}
      <div className="absolute left-[77px] right-[19px] top-[234px] bottom-[22px] pointer-events-none">
        <Artboard />
        <InfoPanel />
      </div>
      <ToolPanel />
      <div className="absolute -right-10 top-[162px] w-[88px] h-[88px] pl-[13px] pt-[2px] flex items-center bg-[#272727] border border-[#444] rounded-2xl shadow-[0_2px_8px_rgba(0,0,0,0.5)]">
        <Command className="w-[54px] h-[54px] shrink-0 text-[#868686]" strokeWidth={2.2} />
      </div>
    </div>
  );
}
